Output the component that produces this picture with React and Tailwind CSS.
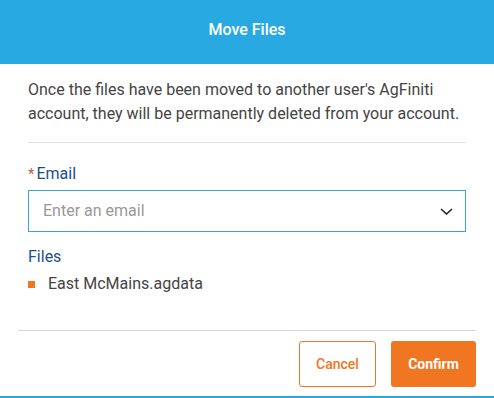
import React from "react";

export default function App() {
  return (
    <div className="w-[494px] h-[398px] overflow-hidden bg-white flex flex-col font-['Roboto','Liberation_Sans',sans-serif]">
      <div className="h-16 shrink-0 bg-[#29a9e1] flex items-center justify-center pb-[4px]">
        <span className="text-white text-[16px] font-medium">Move Files</span>
      </div>
      <div className="px-7 pt-[14px]">
        <p className="text-[16px] leading-6 text-[#444444]">
          Once the files have been moved to another user's AgFiniti account, they will be permanently deleted from your account.
        </p>
        <div className="mt-4 h-px bg-[#e2e2e2]" />
        <div className="mt-[21px] flex items-center h-5 text-[16px] text-[#1b4f8a]">
          <span className="text-[#d9534f] mr-[2px] text-[15px]">*</span>
          <span>Email</span>
        </div>
        <div className="mt-[6px] h-[42px] border border-[#3ba6c9] flex items-center justify-between pl-[14px] pr-[12px]">
          <span className="text-[16px] text-[#999999]">Enter an email</span>
          <svg width="13" height="7" viewBox="0 0 13 7" fill="none">
            <path d="M1 1 L6.5 6 L12 1" stroke="#222" strokeWidth="1.6" />
          </svg>
        </div>
        <div className="mt-[15px] h-5 flex items-center text-[16px] text-[#1b4f8a]">Files</div>
        <div className="mt-[7px] h-5 flex items-center">
          <span className="w-[7px] h-[7px] bg-[#f07622] mr-[13px]" />
          <span className="text-[16px] text-[#444444]">East McMains.agdata</span>
        </div>
      </div>
      <div className="mx-[18px] mt-[36px] h-px bg-[#d6d6d6]" />
      <div className="flex justify-end gap-[15px] pr-[18px] mt-[10px]">
        <button className="w-[77px] h-[46px] border border-[#f07622] rounded-[3px] text-[#f07622] text-[14px] font-medium bg-white">
          Cancel
        </button>
        <button className="w-[85px] h-[46px] rounded-[3px] bg-[#f07622] text-white text-[14px] font-bold">
          Confirm
        </button>
      </div>
      <div className="mt-auto h-[2px] bg-[#29a9e1]" />
    </div>
  );
}
